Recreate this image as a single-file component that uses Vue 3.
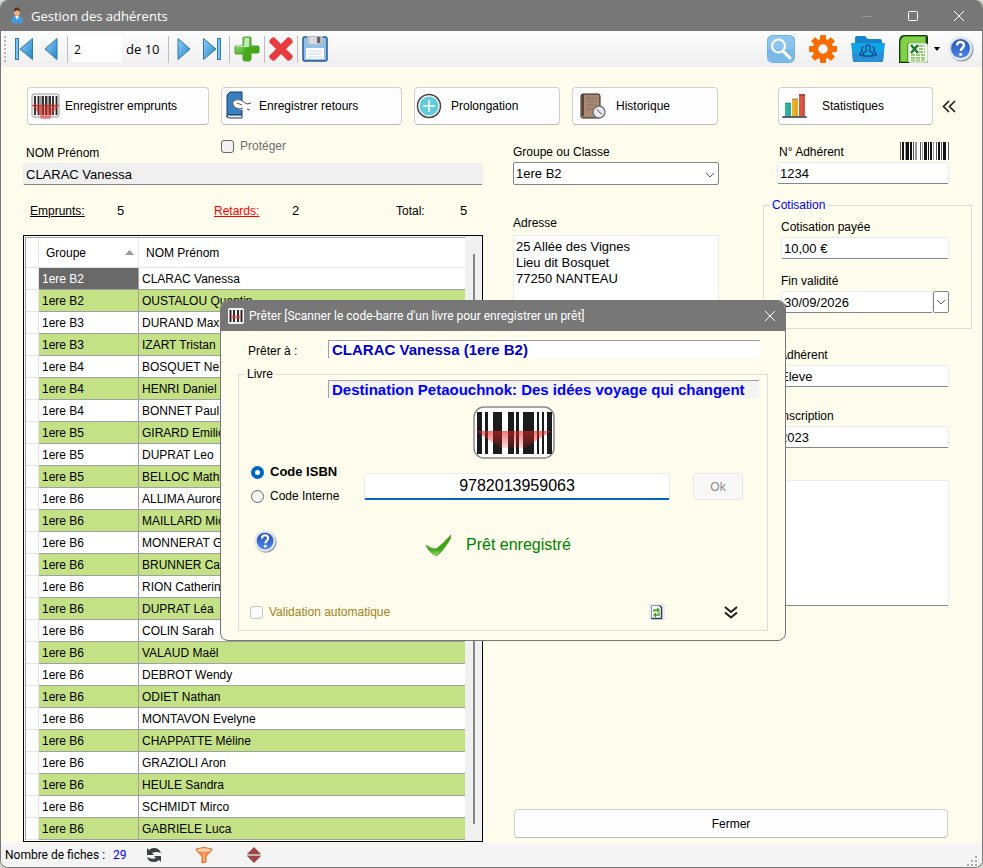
<script setup>
import { ref } from 'vue'

const page = ref('2')
const fullName = ref('CLARAC Vanessa')
const isProtected = ref(false)
const groupe = ref('1ere B2')
const adresse = ref('25 Allée des Vignes\nLieu dit Bosquet\n77250 NANTEAU')
const numero = ref('1234')
const cotisation = ref('10,00 €')
const finValidite = ref('30/09/2026')
const typeAdherent = ref('Eleve')
const inscription = ref('2023')
const notes = ref('')

const dialogOpen = ref(true)
const preterA = ref('CLARAC Vanessa (1ere B2)')
const livre = ref('Destination Petaouchnok: Des idées voyage qui changent')
const codeType = ref('isbn')
const code = ref('9782013959063')

const selected = ref(0)

const members = [
  ['1ere B2', 'CLARAC Vanessa'],
  ['1ere B2', 'OUSTALOU Quentin'],
  ['1ere B3', 'DURAND Maxime'],
  ['1ere B3', 'IZART Tristan'],
  ['1ere B4', 'BOSQUET Nelly'],
  ['1ere B4', 'HENRI Daniel'],
  ['1ere B4', 'BONNET Paul'],
  ['1ere B5', 'GIRARD Emilie'],
  ['1ere B5', 'DUPRAT Leo'],
  ['1ere B5', 'BELLOC Mathieu'],
  ['1ere B6', 'ALLIMA Aurore'],
  ['1ere B6', 'MAILLARD Michel'],
  ['1ere B6', 'MONNERAT Gilles'],
  ['1ere B6', 'BRUNNER Carole'],
  ['1ere B6', 'RION Catherine'],
  ['1ere B6', 'DUPRAT Léa'],
  ['1ere B6', 'COLIN Sarah'],
  ['1ere B6', 'VALAUD Maël'],
  ['1ere B6', 'DEBROT Wendy'],
  ['1ere B6', 'ODIET Nathan'],
  ['1ere B6', 'MONTAVON Evelyne'],
  ['1ere B6', 'CHAPPATTE Méline'],
  ['1ere B6', 'GRAZIOLI Aron'],
  ['1ere B6', 'HEULE Sandra'],
  ['1ere B6', 'SCHMIDT Mirco'],
  ['1ere B6', 'GABRIELE Luca'],
]

// x, largeur, couleur des barres du petit code-barres
const bars = [
  [0, 1, '#555'], [2, 2, '#111'], [5, 1, '#999'], [6, 3, '#111'], [10, 2, '#111'], [13, 1, '#555'],
  [15, 2, '#999'], [20, 1, '#555'], [22, 1, '#999'], [24, 3, '#111'], [28, 1, '#111'], [30, 2, '#111'],
  [33, 1, '#999'], [36, 1, '#555'], [38, 2, '#111'], [41, 1, '#555'], [43, 3, '#111'], [48, 1, '#555'],
]
</script>

<template>
  <div class="window">
    <header class="titlebar">
      <svg class="titlebar__icon" width="16" height="17" viewBox="0 0 16 17" aria-hidden="true">
        <path d="M2 15c0-4 2-6 6-6s6 2 6 6c-3 2-9 2-12 0z" fill="#3f9bdc" />
        <path d="M6 9h4l-2 4z" fill="#e8f3fb" />
        <ellipse cx="8" cy="5" rx="3" ry="4" fill="#e9b489" />
        <path d="M5 5c-1-6 7-6 6 0-1-2-4-2-6 0z" fill="#5d3115" />
      </svg>
      <h1 class="titlebar__text">Gestion des adhérents</h1>
      <button type="button" class="titlebar__btn" aria-label="Réduire">
        <svg width="12" height="12" viewBox="0 0 12 12"><path d="M1 6.500h10" stroke="#969696" /></svg>
      </button>
      <button type="button" class="titlebar__btn" aria-label="Agrandir">
        <svg width="12" height="12" viewBox="0 0 12 12"><rect x="1.500" y="1.500" width="9" height="9" rx="1" fill="none" stroke="#fff" /></svg>
      </button>
      <button type="button" class="titlebar__btn" aria-label="Fermer la fenêtre">
        <svg width="12" height="12" viewBox="0 0 12 12"><path d="M1 1l10 10M11 1L1 11" stroke="#fff" /></svg>
      </button>
    </header>

    <nav class="toolbar" aria-label="Barre d'outils">
      <span class="toolbar__grip" aria-hidden="true"></span>
      <button type="button" class="tool tool--22" aria-label="Premier">
        <svg width="20" height="24" viewBox="0 0 20 24">
          <defs>
            <linearGradient id="nav" x1="0" y1="0" x2="1" y2="1">
              <stop offset="0" stop-color="#8fd0f7" />
              <stop offset="1" stop-color="#2583c4" />
            </linearGradient>
          </defs>
          <rect x="1.500" y="1.500" width="3" height="21" fill="#7cc3f0" stroke="#2a78b5" />
          <path d="M18.500 1.500v21L6 12z" fill="url(#nav)" stroke="#2a78b5" />
        </svg>
      </button>
      <button type="button" class="tool tool--24" aria-label="Précédent">
        <svg width="14" height="24" viewBox="0 0 14 24"><path d="M13 1.500v21L1 12z" fill="url(#nav)" stroke="#2a78b5" /></svg>
      </button>
      <span class="toolbar__sep"></span>
      <input v-model="page" class="toolbar__page" aria-label="Position" />
      <span class="toolbar__count">de 10</span>
      <span class="toolbar__sep"></span>
      <button type="button" class="tool tool--22" aria-label="Suivant">
        <svg width="14" height="24" viewBox="0 0 14 24"><path d="M1 1.500v21L13 12z" fill="url(#nav)" stroke="#2a78b5" /></svg>
      </button>
      <button type="button" class="tool tool--26" aria-label="Dernier">
        <svg width="20" height="24" viewBox="0 0 20 24">
          <rect x="15.500" y="1.500" width="3" height="21" fill="#7cc3f0" stroke="#2a78b5" />
          <path d="M1.500 1.500v21L14 12z" fill="url(#nav)" stroke="#2a78b5" />
        </svg>
      </button>
      <span class="toolbar__sep"></span>
      <button type="button" class="tool tool--26" aria-label="Ajouter">
        <svg width="26" height="26" viewBox="0 0 26 26">
          <defs>
            <linearGradient id="plus" x1="0" y1="0" x2="1" y2="1">
              <stop offset="0" stop-color="#a5dc8e" />
              <stop offset="0.500" stop-color="#55b830" />
              <stop offset="1" stop-color="#3f9c10" />
            </linearGradient>
          </defs>
          <path d="M11 1h5q1 0 1 1v8h7q1 0 1 1v5q0 1-1 1h-7v6q0 2-2 2h-4q-2 0-2-2v-5H2q-1 0-1-1v-6q0-1 1-1h7V2q0-1 2-1z" fill="url(#plus)" stroke="#4b9b2e" />
          <path d="M11 2h4v9H2v-1h8z" fill="#d9f2d0" opacity="0.800" />
          <path d="M10 12c5 0 8-1 14-1v5h-8v7h-6z" fill="#46a712" opacity="0.700" />
        </svg>
      </button>
      <span class="toolbar__sep"></span>
      <button type="button" class="tool tool--24" aria-label="Supprimer">
        <svg width="24" height="24" viewBox="0 0 24 24">
          <path d="M5 0l7 7 7-7q4 1 5 5l-7 7 7 7q-1 4-5 5l-7-7-7 7q-4-1-5-5l7-7-7-7q1-4 5-5z" fill="#e63b3f" />
        </svg>
      </button>
      <span class="toolbar__sep"></span>
      <button type="button" class="tool tool--26" aria-label="Enregistrer">
        <svg width="26" height="26" viewBox="0 0 26 26">
          <rect x="1" y="1" width="24" height="24" rx="2" fill="#8fc1ef" stroke="#28588f" stroke-width="1.500" />
          <rect x="5" y="0" width="16" height="9" fill="#b9bdc1" />
          <rect x="7" y="1" width="9" height="7" fill="#d9dadb" />
          <rect x="15" y="1" width="3" height="6" fill="#5e6468" />
          <rect x="4" y="12" width="18" height="11" fill="#fff" />
          <path d="M6 15h14M6 18h14M6 21h14" stroke="#c9d8e6" />
        </svg>
      </button>

      <div class="toolbar__right">
        <button type="button" class="tool" aria-label="Rechercher">
          <svg width="28" height="28" viewBox="0 0 28 28">
            <rect x="0.500" y="0.500" width="27" height="27" rx="5" fill="#8cc5ee" stroke="#6fb2e2" />
            <path d="M1 14h26v8q0 5-5 5H6q-5 0-5-5z" fill="#6ab1e3" opacity="0.600" />
            <circle cx="11.500" cy="11" r="6.500" fill="none" stroke="#fff" stroke-width="2.200" />
            <path d="M16 16l7 7" stroke="#fff" stroke-width="3" stroke-linecap="round" />
          </svg>
        </button>
        <button type="button" class="tool" aria-label="Paramètres">
          <svg width="28" height="28" viewBox="0 0 28 28">
            <g fill="#f96d00">
              <rect v-for="a in 8" :key="a" x="11" y="0" width="6" height="7" rx="1" :transform="`rotate(${a * 45} 14 14)`" />
            </g>
            <circle cx="14" cy="14" r="7.500" fill="none" stroke="#f96d00" stroke-width="5.500" />
          </svg>
        </button>
        <button type="button" class="tool" aria-label="Groupes">
          <svg width="34" height="28" viewBox="0 0 34 28">
            <path d="M4 8V3q0-2 2-2h8l3 3h12q2 0 2 2v6H4z" fill="#1683cd" />
            <path d="M0 8h34l-2 18q0 1-2 1H4q-2 0-2-1z" fill="#10a5e6" />
            <path d="M1 16q16 10 32 0l-1 10q0 1-2 1H4q-2 0-2-1z" fill="#2b8fd6" />
            <g fill="none" stroke="#0a4f8d" stroke-width="1.500">
              <path d="M15.500 16q-2-6 1.500-6t1.500 6l3 2v3h-9v-3z" />
              <path d="M11.500 17q-2-5 1-5M11 17l-2 1v2h3M22.500 17q2-5-1-5M23 17l2 1v2h-3" />
            </g>
          </svg>
        </button>
        <button type="button" class="tool tool--menu" aria-label="Exporter vers Excel">
          <svg width="30" height="28" viewBox="0 0 30 28">
            <path d="M5 0h22q2 0 2 2v24q0 2-2 2H0V7q0-7 5-7z" fill="#17390f" />
            <path d="M6 1h21v26H1V8q0-6 5-7z" fill="#43a722" />
            <path d="M5 2h21v6H11q-3 0-3 3v15H2V8q0-5 3-6z" fill="#83cf49" />
            <rect x="9.500" y="8.500" width="19" height="19" rx="2" fill="#f5faf0" stroke="#cfd9c8" />
            <path d="M20 11h6M20 14h6M20 17h6M12 20h14M12 23h14M12 25.500h14" stroke="#9acb74" stroke-width="2" stroke-dasharray="4 1" />
            <path d="M12 10l7 8M19 10l-7 8" stroke="#1d7a2c" stroke-width="2.500" />
          </svg>
          <svg width="6" height="4" viewBox="0 0 6 4"><path d="M0 0h6L3 4z" fill="#000" /></svg>
        </button>
        <button type="button" class="tool tool--help" aria-label="Aide">
          <svg width="26" height="26" viewBox="0 0 26 26">
            <defs>
              <linearGradient id="help" x1="0" y1="0" x2="0" y2="1">
                <stop offset="0" stop-color="#2450b4" />
                <stop offset="1" stop-color="#4f88ea" />
              </linearGradient>
            </defs>
            <circle cx="13.500" cy="13.500" r="12" fill="#8d929b" />
            <circle cx="12.500" cy="12.500" r="12" fill="#dfe6f0" />
            <circle cx="12.500" cy="12.500" r="9.500" fill="url(#help)" />
            <path d="M9 9.500q0-3.500 3.500-3.500t3.500 3.300c0 2.700-3.200 2.700-3.200 5.700" fill="none" stroke="#fff" stroke-width="2.400" />
            <circle cx="12.700" cy="18.300" r="1.600" fill="#fff" />
          </svg>
        </button>
      </div>
    </nav>

    <main class="body">
      <div class="actions">
        <button type="button" class="btn action action--a">
          <svg width="30" height="30" viewBox="0 0 30 30" aria-hidden="true">
            <rect x="1" y="3" width="27" height="23" rx="2" fill="#f4f4f4" stroke="#9a9a9a" />
            <path d="M4 5v19M7.500 5v19M12 5v19M15 5v19M19 5v19M22 5v19M25.500 5v19" stroke="#222" stroke-width="1.800" />
            <path d="M10 5v19M17 5v19" stroke="#222" stroke-width="0.800" />
            <path d="M1 14h27l-7 9-2 5h-9l-2-5z" fill="#ee2b20" opacity="0.500" />
            <path d="M1 14.500h27" stroke="#e0271d" />
          </svg>
          <span>Enregistrer emprunts</span>
        </button>
        <button type="button" class="btn action action--b">
          <svg width="28" height="30" viewBox="0 0 28 30" aria-hidden="true">
            <path d="M2 4l3-3h12v23H4q-2 0-2 2z" fill="#3a7fc0" stroke="#1c3c5e" />
            <path d="M17 24v3H5q-3 0-3-2t3-1z" fill="#e8eef3" stroke="#1c3c5e" />
            <path d="M8 10q3-3 8-1l6 4 4-1v6l-3-1-5 2q-5 0-9-3-2-3-1-7z" fill="#fff" />
            <path d="M8 10q4-2 8-1 4 3 6 4l4-1M22 18l3 1M8 10q-1 5 3 7 4 2 7 0M12 12l5 2" fill="none" stroke="#444" stroke-width="0.900" />
          </svg>
          <span>Enregistrer retours</span>
        </button>
        <button type="button" class="btn action action--c">
          <svg width="26" height="26" viewBox="0 0 26 26" aria-hidden="true">
            <circle cx="13" cy="13" r="11.500" fill="#fff" stroke="#444" stroke-width="1.500" />
            <circle cx="13" cy="13" r="9.500" fill="#62cbdd" />
            <path d="M13 7v12M7 13h12" stroke="#fff" stroke-width="1.500" />
          </svg>
          <span>Prolongation</span>
        </button>
        <button type="button" class="btn action action--d">
          <svg width="26" height="26" viewBox="0 0 26 26" aria-hidden="true">
            <path d="M3 1h15q2 0 2 2v20q0 2-2 2H3q-2 0-2-2V3q0-2 2-2z" fill="#a88a74" stroke="#2c211a" />
            <path d="M2 2h2v21H2z" fill="#5b4435" />
            <path d="M7 5h10M7 8h10M7 12h10M7 16h6" stroke="#927662" stroke-width="1.500" stroke-dasharray="3 1" />
            <circle cx="19" cy="19" r="6" fill="#e3e9ee" stroke="#687079" stroke-width="1.300" />
            <path d="M17 16l2 3 3 2" fill="none" stroke="#b04040" />
          </svg>
          <span>Historique</span>
        </button>
        <div class="actions__end">
          <button type="button" class="btn action action--e">
            <svg width="26" height="26" viewBox="0 0 26 26" aria-hidden="true">
              <path d="M3 10h6v13H3z" fill="#2fb59c" />
              <path d="M10 6h6v17h-6z" fill="#ecb32a" />
              <path d="M17 1h6v22h-6z" fill="#dc5747" />
              <path d="M3 10h6M10 6h6M17 2h6" stroke="#00000040" stroke-width="1.500" />
              <path d="M7 12v11M14 8v15M21 4v19" stroke="#00000022" />
              <rect x="0" y="23" width="25" height="2" rx="1" fill="#5d6468" />
            </svg>
            <span>Statistiques</span>
          </button>
          <button type="button" class="icon-btn" aria-label="Replier">
            <svg width="14" height="13" viewBox="0 0 14 13"><path d="M7 1L1.500 6.500 7 12M13 1L7.500 6.500 13 12" fill="none" stroke="#222" stroke-width="1.700" /></svg>
          </button>
        </div>
      </div>

      <div class="panes">
        <section class="pane">
          <div class="name-head">
            <label for="nom" class="label">NOM Prénom</label>
            <label class="protect"><input v-model="isProtected" type="checkbox" class="check check--disabled" disabled /> Protéger</label>
          </div>
          <input id="nom" v-model="fullName" class="field field--readonly" readonly />

          <div class="stats">
            <a href="#emprunts">Emprunts:</a><span class="stats__n">5</span>
            <a href="#retards" class="stats__late">Retards:</a><span class="stats__n">2</span>
            <span>Total:</span><span class="stats__n">5</span>
          </div>

          <div class="list">
            <table class="grid">
              <colgroup><col class="grid__c0" /><col class="grid__c1" /><col /></colgroup>
              <thead>
                <tr>
                  <td></td>
                  <th scope="col">
                    <span class="grid__sort">Groupe
                      <svg width="9" height="5" viewBox="0 0 9 5" aria-hidden="true"><path d="M0 5h9L4.500 0z" fill="#999" /></svg>
                    </span>
                  </th>
                  <th scope="col">NOM Prénom</th>
                </tr>
              </thead>
              <tbody>
                <tr v-for="(m, i) in members" :key="m[1]" @click="selected = i">
                  <td class="grid__mark"></td>
                  <td :class="{ 'grid__cell--on': selected === i }">{{ m[0] }}</td>
                  <td>{{ m[1] }}</td>
                </tr>
              </tbody>
            </table>
            <div class="scroll" aria-hidden="true"><span class="scroll__thumb"></span></div>
          </div>
        </section>

        <section class="pane pane--right">
          <div class="cols">
            <div class="col">
              <label for="groupe" class="label">Groupe ou Classe</label>
              <div class="select">
                <select id="groupe" v-model="groupe">
                  <option>1ere B2</option>
                  <option>1ere B3</option>
                  <option>1ere B4</option>
                  <option>1ere B5</option>
                  <option>1ere B6</option>
                </select>
                <svg class="select__arrow" width="10" height="6" viewBox="0 0 10 6" aria-hidden="true"><path d="M1 1l4 4 4-4" fill="none" stroke="#555" /></svg>
              </div>
              <label for="adresse" class="label label--address">Adresse</label>
              <textarea id="adresse" v-model="adresse" class="area area--address"></textarea>
            </div>

            <div class="col">
              <div class="inset">
                <div class="num-head">
                  <label for="numero" class="label">N° Adhérent</label>
                  <svg width="49" height="18" viewBox="0 0 49 18" aria-hidden="true">
                    <rect width="49" height="18" fill="#fff" />
                    <rect v-for="b in bars" :key="b[0]" :x="b[0]" y="0" :width="b[1]" height="18" :fill="b[2]" />
                  </svg>
                </div>
                <input id="numero" v-model="numero" class="field" />
              </div>
              <fieldset class="box">
                <legend>Cotisation</legend>
                <label for="cotisation" class="label">Cotisation payée</label>
                <input id="cotisation" v-model="cotisation" class="field" />
                <label for="fin" class="label label--date">Fin validité</label>
                <div class="date">
                  <input id="fin" v-model="finValidite" class="field" />
                  <button type="button" class="date__btn" aria-label="Ouvrir le calendrier">
                    <svg width="10" height="6" viewBox="0 0 10 6"><path d="M1 1l4 4 4-4" fill="none" stroke="#555" /></svg>
                  </button>
                </div>
              </fieldset>
              <div class="inset inset--type">
                <label for="type" class="label">Adhérent</label>
                <input id="type" v-model="typeAdherent" class="field" />
              </div>
              <div class="inset inset--year">
                <label for="inscription" class="label">Inscription</label>
                <input id="inscription" v-model="inscription" class="field" />
              </div>
            </div>
          </div>
          <textarea v-model="notes" class="area area--notes" aria-label="Notes"></textarea>
          <button type="button" class="btn close-btn">Fermer</button>
        </section>
      </div>
    </main>

    <footer class="status">
      <span>Nombre de fiches :</span><span class="status__n">29</span>
      <button type="button" class="status__btn" aria-label="Actualiser">
        <svg width="16" height="16" viewBox="0 0 16 16">
          <g fill="#3c3f42">
            <path d="M1 1v7h7L6 6q4-2 9 0-2-5-7-5-3 0-5 2z" />
            <path d="M15 15V9H8l2 2q-4 2-9-1 1 5 7 5 3 0 5-2z" />
          </g>
        </svg>
      </button>
      <button type="button" class="status__btn" aria-label="Filtrer">
        <svg width="18" height="17" viewBox="0 0 18 17">
          <path d="M1 2q8-3 16 0 0 2-6 7v6l-4 1V9Q1 4 1 2z" fill="#f78f4c" stroke="#d96b2f" />
          <ellipse cx="9" cy="3" rx="7" ry="1.700" fill="#fbd0ae" />
          <path d="M9 6v9" stroke="#fbc08f" />
        </svg>
      </button>
      <button type="button" class="status__btn" aria-label="Trier">
        <svg width="14" height="16" viewBox="0 0 14 16">
          <path d="M0 7l7-7 7 7zM0 9h14l-7 7z" fill="#a04545" />
          <path d="M0 7h14v2H0z" fill="#c9b4b4" />
        </svg>
      </button>
      <svg class="status__grip" width="11" height="11" viewBox="0 0 11 11" aria-hidden="true">
        <path d="M8 0h2v2H8zM4 4h2v2H4zM8 4h2v2H8zM0 8h2v2H0zM4 8h2v2H4zM8 8h2v2H8z" fill="#aaa" />
      </svg>
    </footer>

    <!-- Fenêtre de prêt -->
    <section v-if="dialogOpen" class="dialog" role="dialog" aria-labelledby="dialog-title">
      <header class="dialog__bar">
        <svg width="16" height="16" viewBox="0 0 16 16" aria-hidden="true">
          <rect width="16" height="16" rx="2" fill="#f4f4f4" />
          <path d="M2.500 2v12M6 2v12M10 2v12M13.500 2v12" stroke="#151515" stroke-width="1.800" />
          <path d="M1 7h14l-3 4H4z" fill="#d8403a" opacity="0.450" />
        </svg>
        <h2 id="dialog-title" class="dialog__title">Prêter [Scanner le code-barre d'un livre pour enregistrer un prêt]</h2>
        <button type="button" class="dialog__close" aria-label="Fermer le prêt" @click="dialogOpen = false">
          <svg width="12" height="12" viewBox="0 0 12 12"><path d="M1 1l10 10M11 1L1 11" stroke="#fff" /></svg>
        </button>
      </header>
      <div class="dialog__row">
        <label for="preter">Prêter à :</label>
        <input id="preter" v-model="preterA" class="loan" />
      </div>
      <fieldset class="book">
        <legend>Livre</legend>
        <input v-model="livre" class="loan loan--book" readonly aria-label="Livre" />
        <div class="book__scan">
          <svg width="82" height="53" viewBox="0 0 82 53" aria-hidden="true">
            <rect x="1" y="1" width="80" height="51" rx="10" fill="#fff" stroke="#8a8a8a" stroke-width="1.500" />
            <g fill="#1c1c1e">
              <rect x="4" y="6" width="5" height="42" />
              <rect x="12" y="6" width="3" height="42" />
              <rect x="20" y="6" width="9" height="42" />
              <rect x="35" y="6" width="6" height="42" />
              <rect x="43" y="6" width="3" height="42" />
              <rect x="50" y="6" width="11" height="42" />
              <rect x="64" y="6" width="2" height="42" />
              <rect x="69" y="6" width="2" height="42" />
              <rect x="74" y="6" width="5" height="42" />
            </g>
            <defs>
              <linearGradient id="beam" x1="0" y1="0" x2="0" y2="1">
                <stop offset="0" stop-color="#e0201c" stop-opacity="0.600" />
                <stop offset="1" stop-color="#e0201c" stop-opacity="0.150" />
              </linearGradient>
            </defs>
            <path d="M3 25h75L52 42H28z" fill="url(#beam)" />
          </svg>
        </div>
        <div class="book__code">
          <div class="book__radios">
            <label :class="{ strong: codeType === 'isbn' }"><input v-model="codeType" type="radio" name="code" value="isbn" class="radio" />Code ISBN</label>
            <label :class="{ strong: codeType === 'interne' }"><input v-model="codeType" type="radio" name="code" value="interne" class="radio" />Code Interne</label>
          </div>
          <div class="book__entry">
            <input v-model="code" class="code" aria-label="Code du livre" />
            <button type="button" class="btn ok" disabled>Ok</button>
          </div>
        </div>
        <div class="book__result">
          <button type="button" class="icon-btn book__help" aria-label="Aide sur le prêt">
            <svg width="23" height="23" viewBox="0 0 26 26">
              <circle cx="13.500" cy="13.500" r="12" fill="#8d929b" />
              <circle cx="12.500" cy="12.500" r="12" fill="#dfe6f0" />
              <circle cx="12.500" cy="12.500" r="9.500" fill="url(#help)" />
              <path d="M9 9.500q0-3.500 3.500-3.500t3.500 3.300c0 2.700-3.200 2.700-3.200 5.700" fill="none" stroke="#fff" stroke-width="2.400" />
              <circle cx="12.700" cy="18.300" r="1.600" fill="#fff" />
            </svg>
          </button>
          <svg width="27" height="23" viewBox="0 0 27 23" aria-hidden="true">
            <defs>
              <linearGradient id="tick" x1="0" y1="0" x2="0" y2="1">
                <stop offset="0" stop-color="#3f9a17" />
                <stop offset="0.700" stop-color="#45a81b" />
                <stop offset="1" stop-color="#9be07a" />
              </linearGradient>
            </defs>
            <path d="M1 11q5 4 10 4Q19 9 26 1q0 4-4 9-5 8-10 12Q4 19 1 11z" fill="url(#tick)" stroke="#46a01f" stroke-width="0.700" />
          </svg>
          <output class="book__msg">Prêt enregistré</output>
        </div>
        <div class="book__foot">
          <label class="auto"><input type="checkbox" class="check check--faint" disabled />Validation automatique</label>
          <button type="button" class="icon-btn" aria-label="Recharger">
            <svg width="16" height="16" viewBox="0 0 16 16">
              <rect width="16" height="16" fill="#ececee" />
              <path d="M2.500 1.500h8l2 2v11h-10z" fill="#fff" stroke="#7d9bb8" />
              <path d="M10.500 1.500l2 2v11h-10" fill="none" stroke="#2c3f5c" stroke-width="1.500" />
              <path d="M5 8V6h4M8 4l2 2-2 2M10 8v3H6M7 9l-2 2 2 2" fill="none" stroke="#4c9a1c" stroke-width="1.300" />
            </svg>
          </button>
          <button type="button" class="icon-btn" aria-label="Déplier">
            <svg width="14" height="13" viewBox="0 0 14 13"><path d="M1 1l6 5 6-5M1 6.500l6 5 6-5" fill="none" stroke="#1c1c1c" stroke-width="2" /></svg>
          </button>
        </div>
      </fieldset>
    </section>
  </div>
</template>

<style>
body {
  margin: 0;
  background: #d4d4d0;
}
</style>

<style scoped>
.window {
  --cream: #fefcec;
  --chrome: #777;
  position: relative;
  display: flex;
  flex-direction: column;
  box-sizing: border-box;
  min-height: 100vh;
  border: 1px solid var(--chrome);
  border-top: none;
  border-radius: 8px;
  overflow: hidden;
  background: var(--cream);
  color: #000;
  font-family: 'Liberation Sans', Arial, sans-serif;
  font-size: 12px;
}

.window *,
.window *::before {
  box-sizing: border-box;
}

button,
input,
select,
textarea {
  margin: 0;
  border-radius: 0;
  color: inherit;
  font: inherit;
}

svg {
  display: block;
  flex-shrink: 0;
}

.titlebar {
  display: flex;
  align-items: center;
  height: 31px;
  padding-left: 8px;
  background: var(--chrome);
  color: #fff;
}

.titlebar__text {
  flex: 1;
  margin: 0 0 0 6px;
  font-family: 'Open Sans', sans-serif;
  font-size: 13px;
  font-weight: 400;
}

.titlebar__btn,
.dialog__close {
  display: flex;
  align-items: center;
  justify-content: center;
  width: 46px;
  height: 30px;
  padding: 0;
  border: none;
  background: transparent;
}

.toolbar {
  display: flex;
  align-items: center;
  gap: 4px;
  height: 36px;
  padding: 0 8px 0 3px;
  background: linear-gradient(#fdfdfd, #efefef);
  font-family: 'Open Sans', sans-serif;
}

.toolbar__grip {
  width: 5px;
  height: 26px;
  background: repeating-linear-gradient(#b8b8b8 0 2px, transparent 2px 4px) 0 0 / 2px 100% no-repeat;
}

.toolbar__sep {
  width: 1px;
  height: 27px;
  background: #bdbdbd;
}

.toolbar__page {
  width: 50px;
  height: 26px;
  padding: 0 2px;
  border: none;
  background: #fff;
}

.toolbar__count {
  width: 38px;
  font-size: 13px;
  white-space: nowrap;
}

.toolbar__right {
  display: flex;
  align-items: center;
  gap: 14px;
  margin-left: auto;
}

.tool {
  display: flex;
  align-items: center;
  justify-content: center;
  padding: 0;
  border: none;
  background: transparent;
}

.tool--22 {
  width: 22px;
}

.tool--24 {
  width: 24px;
}

.tool--26 {
  width: 26px;
}

.tool--menu {
  gap: 5px;
}

.tool--help {
  margin-left: -6px;
}

.body {
  display: flex;
  flex: 1;
  flex-direction: column;
  padding: 20px 10px 1px 22px;
}

.btn {
  border: 1px solid #d0d0d0;
  border-bottom-color: #bababa;
  border-radius: 4px;
  background: #fdfdfd;
}

.actions {
  display: grid;
  grid-template-columns: 182fr 181fr 146fr 146fr 242fr;
  gap: 12px;
  padding-left: 4px;
}

.actions__end {
  display: flex;
  align-items: center;
  gap: 6px;
  padding: 0 13px 0 48px;
}

.action {
  display: flex;
  align-items: center;
  height: 38px;
  padding: 0 3px;
  white-space: nowrap;
}

.action--a {
  gap: 4px;
}

.action--b {
  gap: 6px;
}

.action--c {
  gap: 9px;
  padding: 0 1px;
}

.action--d {
  gap: 10px;
  padding: 0 7px;
}

.action--e {
  flex: 1;
  gap: 14px;
}

.icon-btn {
  display: flex;
  align-items: center;
  justify-content: center;
  min-width: 20px;
  padding: 0;
  border: none;
  background: transparent;
}

.panes {
  display: grid;
  flex: 1;
  grid-template-columns: 460fr 459fr;
  gap: 30px;
}

.pane {
  display: flex;
  flex-direction: column;
  min-width: 0;
}

.label {
  display: block;
  line-height: 20px;
}

.name-head {
  display: grid;
  grid-template-columns: 195fr 262fr;
  height: 38px;
  padding: 12px 0 0 3px;
}

.name-head .label {
  align-self: end;
}

.protect {
  display: flex;
  align-items: center;
  align-self: start;
  gap: 6px;
  line-height: 18px;
  color: #6d6d6d;
}

.check {
  appearance: none;
  width: 13px;
  height: 13px;
  border: 1px solid #666;
  border-radius: 3px;
  background: #f3f3f3;
}

.check--faint {
  border-color: #c6c6c6;
  background: #fafafa;
}

.field {
  display: block;
  width: 100%;
  min-width: 0;
  height: 22px;
  padding: 0 2px;
  border: 1px solid #ececec;
  border-bottom-color: #868686;
  border-radius: 2px;
  background: #fff;
  font-size: 13px;
}

.field--readonly {
  background: #f0f0f0;
}

.stats {
  display: grid;
  grid-template-columns: 87fr 97fr 78fr 104fr 64fr 23fr;
  height: 50px;
  padding: 16px 0 0 7px;
  line-height: 20px;
}

.stats a {
  color: inherit;
}

.stats .stats__late {
  color: #f00;
}

.stats__n {
  font-size: 13px;
}

.list {
  display: flex;
  flex: 1;
  border: 1px solid #000;
  background: #fff;
}

.grid {
  flex: 1;
  align-self: flex-start;
  margin: 1px 0 0 1px;
  border-top: 1px solid #a0a0a0;
  border-left: 1px solid #a0a0a0;
  border-collapse: separate;
  border-spacing: 0;
  table-layout: fixed;
}

.grid__c0 {
  width: 13px;
}

.grid__c1 {
  width: 100px;
}

.grid th,
.grid td {
  height: 22px;
  padding: 0 3px;
  border-right: 1px solid #a0a0a0;
  border-bottom: 1px solid #a0a0a0;
  font-weight: 400;
  text-align: left;
  white-space: nowrap;
}

.grid thead td,
.grid thead th,
.grid .grid__mark {
  border-color: #e5e5e5;
  background: #fff;
}

.grid thead th,
.grid thead td {
  height: 30px;
}

.grid thead th {
  padding: 0 4px 0 7px;
}

.grid tr > :last-child {
  border-right: none;
}

.grid tbody tr:nth-child(even) td {
  background: #c5e186;
}

.grid tbody tr .grid__mark.grid__mark {
  background: #fff;
}

.grid tbody tr .grid__cell--on {
  background: #696969;
  color: #fff;
}

.grid__sort {
  display: flex;
  align-items: center;
  justify-content: space-between;
}

.scroll {
  display: flex;
  justify-content: center;
  width: 17px;
  padding: 18px 0 17px;
  background: #f0f0f0;
}

.scroll__thumb {
  width: 2px;
  background: #868686;
}

.cols {
  display: grid;
  grid-template-columns: 206fr 209fr;
  gap: 44px;
}

.col {
  display: flex;
  flex-direction: column;
  min-width: 0;
  padding-top: 17px;
}

.select {
  position: relative;
}

.select select {
  appearance: none;
  display: block;
  width: 100%;
  height: 23px;
  padding: 0 2px;
  border: 1px solid #868686;
  border-radius: 2px;
  background: #fff;
  font-size: 13px;
}

.select__arrow {
  position: absolute;
  top: 10px;
  right: 4px;
  pointer-events: none;
}

.label--address {
  margin: 28px 0 2px;
}

.area {
  display: block;
  padding: 3px 2px;
  border: 1px solid #ececec;
  border-bottom-color: #868686;
  border-radius: 2px;
  background: #fff;
  font-size: 13px;
  line-height: 16px;
  resize: none;
}

.area--address {
  height: 100px;
}

.area--notes {
  height: 126px;
  margin: 32px 23px 0 0;
}

.inset {
  padding: 0 23px 0 14px;
}

.inset .label {
  padding-left: 2px;
}

.inset--type {
  padding-top: 16px;
}

.inset--year {
  padding-top: 19px;
}

.num-head {
  display: flex;
  align-items: flex-start;
  justify-content: space-between;
}

.box {
  min-width: 0;
  margin: 13px 0 0;
  padding: 4px 22px 15px 17px;
  border: 1px solid #dcdcdc;
}

.box legend {
  margin-left: -11px;
  padding: 0 2px;
  line-height: 16px;
  color: #00f;
}

.label--date {
  margin-top: 12px;
}

.date {
  display: flex;
}

.date__btn {
  display: flex;
  flex-shrink: 0;
  align-items: center;
  justify-content: center;
  width: 16px;
  padding: 0;
  border: 1px solid #868686;
  border-radius: 2px;
  background: #fff;
}

.close-btn {
  height: 29px;
  margin: auto 24px 4px 1px;
}

.status {
  display: flex;
  align-items: center;
  height: 24px;
  padding: 0 4px;
  background: #f4f4f4;
  font-family: Roboto, sans-serif;
}

.status__n {
  margin: 0 17px 0 8px;
  color: #00f;
}

.status__btn {
  display: flex;
  align-items: center;
  justify-content: center;
  width: 20px;
  margin-right: 30px;
  padding: 0;
  border: none;
  background: transparent;
}

.status__grip {
  align-self: flex-end;
  margin-left: auto;
}

.dialog {
  position: absolute;
  top: 300px;
  left: 219px;
  display: flex;
  flex-direction: column;
  width: 566px;
  border: 1px solid var(--chrome);
  border-radius: 8px;
  overflow: hidden;
  background: var(--cream);
}

.dialog__bar {
  display: flex;
  align-items: center;
  height: 30px;
  padding-left: 7px;
  background: var(--chrome);
  color: #fff;
}

.dialog__title {
  flex: 1;
  margin: 0 0 0 5px;
  font-family: Roboto, sans-serif;
  font-size: 12px;
  font-weight: 400;
  white-space: nowrap;
}

.dialog__close {
  width: 30px;
}

.dialog__row {
  display: grid;
  grid-template-columns: 80px 1fr;
  align-items: end;
  padding: 9px 25px 0 27px;
}

.dialog__row label {
  line-height: 14px;
}

.loan {
  height: 18px;
  min-width: 0;
  padding: 0 3px;
  border: none;
  border-top: 1px solid #a0a0a0;
  border-left: 1px solid #a0a0a0;
  background: #fff;
  color: #0000c8;
  font-size: 15px;
  font-weight: 700;
}

.loan--book {
  margin-left: 78px;
  background: #f4f4f4;
  color: #00f;
}

.book {
  display: flex;
  flex-direction: column;
  min-width: 0;
  margin: 10px 17px 9px;
  padding: 0 8px 9px 11px;
  border: 1px solid #dcdcdc;
}

.book legend {
  margin-left: -5px;
  padding: 0 2px;
  line-height: 12px;
}

.book__scan {
  padding: 8px 0 3px 223px;
}

.book__code {
  display: flex;
  align-items: center;
  padding-right: 16px;
}

.book__radios {
  display: flex;
  flex-direction: column;
  gap: 4px;
  width: 114px;
}

.book__radios label {
  display: flex;
  align-items: center;
  gap: 6px;
  padding-left: 1px;
  line-height: 20px;
  white-space: nowrap;
}

.book__radios .strong {
  font-size: 13px;
  font-weight: 700;
}

.radio {
  appearance: none;
  width: 13px;
  height: 13px;
  border: 1px solid #666;
  border-radius: 50%;
  background: #f3f3f3;
}

.radio:checked {
  border: 4px solid #0067c0;
  background: #fff;
}

.book__entry {
  display: flex;
  flex: 1;
  gap: 23px;
  padding-top: 5px;
}

.code {
  flex: 1;
  min-width: 0;
  height: 27px;
  padding: 0;
  border: 1px solid #ececec;
  border-bottom: 2px solid #0067c0;
  border-radius: 2px;
  background: #fff;
  font-size: 16px;
  text-align: center;
}

.ok {
  width: 50px;
  padding: 0;
  border-color: #e6e6e6;
  background: #f8f8f8;
  color: #888;
}

.book__result {
  display: flex;
  align-items: center;
  height: 30px;
  margin: 24px 0 43px;
  padding-left: 4px;
}

.book__help {
  align-self: flex-start;
  margin-right: 148px;
}

.book__msg {
  margin-left: 14px;
  color: #008000;
  font-size: 16px;
}

.book__foot {
  display: flex;
  align-items: center;
  gap: 54px;
  height: 18px;
  padding-right: 18px;
}

.auto {
  display: flex;
  align-items: center;
  gap: 6px;
  margin-right: auto;
  color: #a0841c;
}
</style>
